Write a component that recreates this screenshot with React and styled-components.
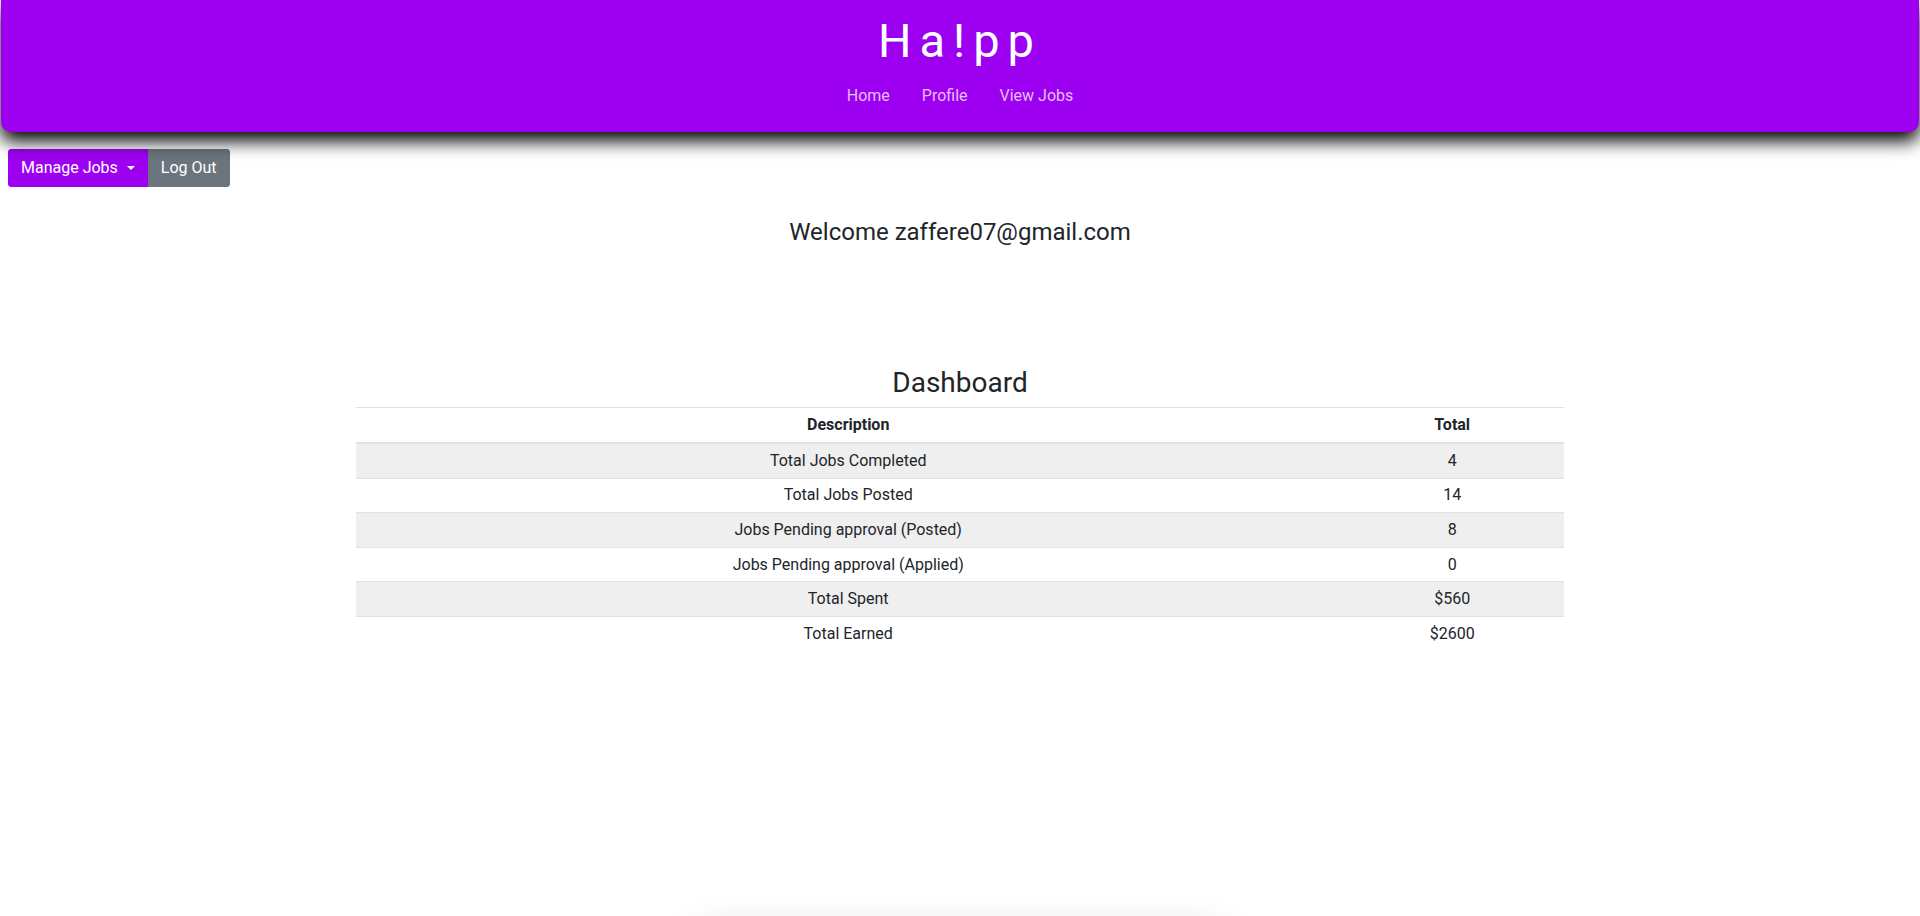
import React from "react";
import styled, { createGlobalStyle } from "styled-components";

const purple = "#9d00f1";

const GlobalStyle = createGlobalStyle`
  body {
    margin: 0;
    font-family: Roboto, "Liberation Sans", Arial, sans-serif;
    font-size: 16px;
    color: #212529;
    background: #fff;
  }
`;

const Header = styled.header`
  position: relative;
  z-index: 2;
  margin: 0 1px;
  padding: 13px 0 16px;
  background: ${purple};
  border-radius: 0 0 10px 10px;
  box-shadow: 0 9px 18px rgba(0, 0, 0, 1);
  display: flex;
  flex-direction: column;
  align-items: center;
`;

const Brand = styled.h1`
  margin: 0 0 8px;
  font-size: 47px;
  font-weight: 400;
  line-height: 55px;
  letter-spacing: 8px;
  color: #fff;
`;

const Nav = styled.nav`
  display: flex;
`;

const NavLink = styled.a`
  padding: 8px 16px;
  line-height: 24px;
  color: rgba(255, 255, 255, 0.75);
  text-decoration: none;
  cursor: pointer;
`;

const Toolbar = styled.div`
  padding: 17px 8px 0;
`;

const ButtonGroup = styled.div`
  display: inline-flex;
  border-radius: 4px;
  overflow: hidden;
`;

const Button = styled.button`
  display: inline-flex;
  align-items: center;
  padding: 6px 12px;
  border: 1px solid ${(p) => p.$bg};
  background: ${(p) => p.$bg};
  color: #fff;
  font-family: inherit;
  font-size: 16px;
  line-height: 24px;
  cursor: pointer;
`;

const Caret = styled.span`
  margin-left: 9px;
  width: 0;
  height: 0;
  border-top: 4px solid #fff;
  border-left: 4px solid transparent;
  border-right: 4px solid transparent;
`;

const Welcome = styled.h4`
  margin: 31px 0 0;
  text-align: center;
  font-size: 24px;
  font-weight: 400;
  line-height: 1.2;
`;

const Dashboard = styled.section`
  width: 1208px;
  margin: 119px auto 0;
`;

const Title = styled.h3`
  margin: 0 0 8px;
  text-align: center;
  font-size: 28px;
  font-weight: 400;
  line-height: 1.2;
`;

const Table = styled.table`
  width: 100%;
  border-collapse: collapse;
`;

const Head = styled.th`
  padding: 4.8px;
  line-height: 24px;
  font-weight: 700;
  text-align: center;
  border-top: 1px solid #dee2e6;
  border-bottom: 2px solid #dee2e6;
  width: ${(p) => p.$width || "auto"};
`;

const Row = styled.tr`
  background: ${(p) => (p.$striped ? "#efefef" : "transparent")};
`;

const Cell = styled.td`
  padding: 4.8px;
  line-height: 24px;
  text-align: center;
  border-top: 1px solid #dee2e6;
`;

const Footer = styled.footer`
  width: 520px;
  height: 60px;
  margin: 279px auto 0;
  background: #fff;
  box-shadow: 0 0 40px rgba(0, 0, 0, 0.14);
`;

const stats = [
  { label: "Total Jobs Completed", total: "4" },
  { label: "Total Jobs Posted", total: "14" },
  { label: "Jobs Pending approval (Posted)", total: "8" },
  { label: "Jobs Pending approval (Applied)", total: "0" },
  { label: "Total Spent", total: "$560" },
  { label: "Total Earned", total: "$2600" },
];

export default function App() {
  return (
    <>
      <GlobalStyle />
      <Header>
        <Brand>Ha!pp</Brand>
        <Nav>
          <NavLink>Home</NavLink>
          <NavLink>Profile</NavLink>
          <NavLink>View Jobs</NavLink>
        </Nav>
      </Header>
      <Toolbar>
        <ButtonGroup>
          <Button $bg={purple}>
            Manage Jobs
            <Caret />
          </Button>
          <Button $bg="#6c757d">Log Out</Button>
        </ButtonGroup>
      </Toolbar>
      <Welcome>Welcome zaffere07@gmail.com</Welcome>
      <Dashboard>
        <Title>Dashboard</Title>
        <Table>
          <thead>
            <tr>
              <Head>Description</Head>
              <Head $width="214px">Total</Head>
            </tr>
          </thead>
          <tbody>
            {stats.map((s, i) => (
              <Row key={s.label} $striped={i % 2 === 0}>
                <Cell>{s.label}</Cell>
                <Cell>{s.total}</Cell>
              </Row>
            ))}
          </tbody>
        </Table>
      </Dashboard>
      <Footer />
    </>
  );
}
